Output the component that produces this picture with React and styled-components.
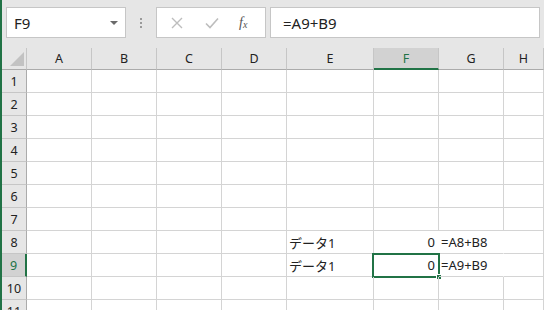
import React from "react";
import styled, { createGlobalStyle } from "styled-components";

const GlobalStyle = createGlobalStyle`
  html, body { margin: 0; padding: 0; background: #fff; overflow: hidden; }
  * { box-sizing: border-box; }
`;

const GREEN = "#217346";
const COLS = ["A", "B", "C", "D", "E", "F", "G", "H"];
const WIDTHS = "25px 65px 65px 65px 65px 87px 65px 65px 1fr";

const cells = {
  "8": { E: { text: "データ1" }, F: { text: "0", right: true, noLine: true }, G: { text: "=A8+B8", noLine: true } },
  "9": { E: { text: "データ1" }, F: { text: "0", right: true, selected: true }, G: { text: "=A9+B9", noLine: true } },
};

const App = () => {
  const rows = Array.from({ length: 11 }, (_, i) => String(i + 1));
  return (
    <>
      <GlobalStyle />
      <Window>
        <FormulaBar>
          <NameBox>
            <span>F9</span>
            <Arrow />
          </NameBox>
          <Dots>
            <i /><i /><i />
          </Dots>
          <ButtonsBox>
            <Icon>
              <svg width="12" height="12" viewBox="0 0 12 12">
                <path d="M1 1 L11 11 M11 1 L1 11" stroke="#bdbdbd" strokeWidth="1.4" fill="none" />
              </svg>
            </Icon>
            <Icon>
              <svg width="14" height="12" viewBox="0 0 14 12">
                <path d="M1 6.5 L5 10.5 L13 1.5" stroke="#bdbdbd" strokeWidth="1.6" fill="none" />
              </svg>
            </Icon>
            <Fx>f<sub>x</sub></Fx>
          </ButtonsBox>
          <FormulaInput>=A9+B9</FormulaInput>
        </FormulaBar>
        <Grid>
          <Corner>
            <svg width="14" height="14" viewBox="0 0 14 14">
              <path d="M14 0 L14 14 L0 14 Z" fill="#c2c2c2" />
            </svg>
          </Corner>
          {COLS.map((c) => (
            <ColHeader key={c} $active={c === "F"}>{c}</ColHeader>
          ))}
          {rows.map((r) => (
            <React.Fragment key={r}>
              <RowHeader $active={r === "9"}>{r}</RowHeader>
              {COLS.map((c) => {
                const d = (cells[r] && cells[r][c]) || {};
                return (
                  <Cell key={c} $right={d.right} $noLine={d.noLine}>
                    {d.text}
                    {d.selected && (
                      <Selection>
                        <Handle />
                      </Selection>
                    )}
                  </Cell>
                );
              })}
            </React.Fragment>
          ))}
        </Grid>
      </Window>
    </>
  );
};

const Window = styled.div`
  width: 544px;
  height: 310px;
  overflow: hidden;
  border-left: 2px solid ${GREEN};
  background: #fff;
  font-family: "Noto Sans", "Noto Sans CJK JP", sans-serif;
`;

const FormulaBar = styled.div`
  height: 48px;
  background: #e6e6e6;
  display: flex;
  align-items: flex-start;
  padding: 7px 0 0 4px;
`;

const Box = styled.div`
  height: 31px;
  background: #fff;
  border: 1px solid #c6c6c6;
  display: flex;
  align-items: center;
`;

const NameBox = styled(Box)`
  width: 120px;
  padding: 0 0 0 7px;
  font-size: 15px;
  color: #222;
  justify-content: space-between;
`;

const Arrow = styled.div`
  width: 0;
  height: 0;
  border-left: 4px solid transparent;
  border-right: 4px solid transparent;
  border-top: 4px solid #6a6a6a;
  margin-right: 7px;
`;

const Dots = styled.div`
  width: 30px;
  height: 31px;
  display: flex;
  flex-direction: column;
  align-items: center;
  justify-content: center;
  gap: 2px;
  i {
    width: 2px;
    height: 2px;
    background: #9a9a9a;
    display: block;
  }
`;

const ButtonsBox = styled(Box)`
  width: 110px;
  padding: 0 0 0 14px;
  gap: 0;
`;

const Icon = styled.div`
  width: 34px;
  display: flex;
  align-items: center;
  justify-content: flex-start;
`;

const Fx = styled.div`
  font-family: "Liberation Serif", serif;
  font-style: italic;
  font-size: 14px;
  color: #555;
  margin-left: 0px;
  sub {
    font-size: 10px;
    vertical-align: -1px;
  }
`;

const FormulaInput = styled(Box)`
  margin-left: 4px;
  width: 270px;
  padding-left: 12px;
  font-size: 15px;
  color: #222;
`;

const Grid = styled.div`
  display: grid;
  grid-template-columns: ${WIDTHS};
  grid-template-rows: 22px;
  grid-auto-rows: 23px;
  background: #fff;
`;

const Corner = styled.div`
  background: #e6e6e6;
  border-right: 1px solid #c6c6c6;
  border-bottom: 1px solid #ababab;
  display: flex;
  align-items: flex-end;
  justify-content: flex-end;
  padding: 0 2px 3px 0;
`;

const ColHeader = styled.div`
  background: ${(p) => (p.$active ? "#d2d2d2" : "#e6e6e6")};
  border-right: 1px solid #c6c6c6;
  border-bottom: ${(p) => (p.$active ? `2px solid ${GREEN}` : "1px solid #ababab")};
  font-size: 12.5px;
  color: ${(p) => (p.$active ? GREEN : "#222")};
  display: flex;
  align-items: center;
  justify-content: center;
  padding-top: ${(p) => (p.$active ? "1px" : "0")};
`;

const RowHeader = styled.div`
  background: ${(p) => (p.$active ? "#d2d2d2" : "#e6e6e6")};
  border-right: ${(p) => (p.$active ? `2px solid ${GREEN}` : "1px solid #ababab")};
  border-bottom: 1px solid #c6c6c6;
  font-size: 12.5px;
  color: ${(p) => (p.$active ? GREEN : "#222")};
  display: flex;
  align-items: center;
  justify-content: center;
`;

const Cell = styled.div`
  position: relative;
  border-right: 1px solid ${(p) => (p.$noLine ? "transparent" : "#d4d4d4")};
  border-bottom: 1px solid #d4d4d4;
  font-size: 13px;
  color: #222;
  display: flex;
  align-items: center;
  justify-content: ${(p) => (p.$right ? "flex-end" : "flex-start")};
  padding: 0 3px 0 2px;
  white-space: nowrap;
  overflow: visible;
`;

const Selection = styled.div`
  position: absolute;
  left: -2px;
  top: -1px;
  right: -2px;
  bottom: -2px;
  border: 2px solid ${GREEN};
  pointer-events: none;
`;

const Handle = styled.div`
  position: absolute;
  right: -4px;
  bottom: -4px;
  width: 6px;
  height: 6px;
  background: ${GREEN};
  border: 1px solid #fff;
`;

export default App;
